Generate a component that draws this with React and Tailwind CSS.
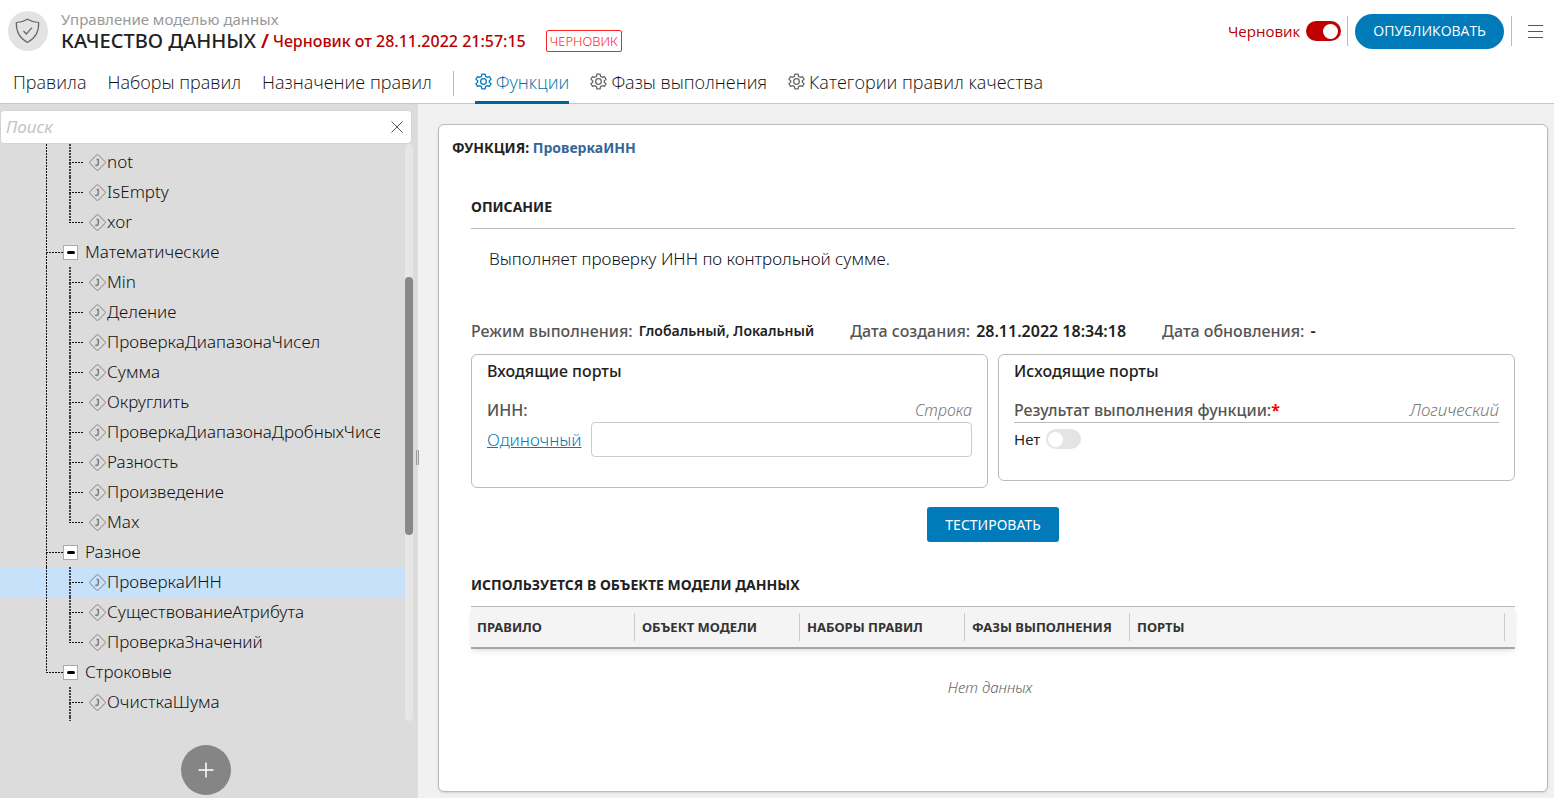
import React from "react";

const TREE = [
  { label: "not", leaf: true },
  { label: "IsEmpty", leaf: true },
  { label: "xor", leaf: true, last: true },
  { label: "Математические" },
  { label: "Min", leaf: true },
  { label: "Деление", leaf: true },
  { label: "ПроверкаДиапазонаЧисел", leaf: true },
  { label: "Сумма", leaf: true },
  { label: "Округлить", leaf: true },
  { label: "ПроверкаДиапазонаДробныхЧисел", leaf: true },
  { label: "Разность", leaf: true },
  { label: "Произведение", leaf: true },
  { label: "Max", leaf: true, last: true },
  { label: "Разное" },
  { label: "ПроверкаИНН", leaf: true, selected: true },
  { label: "СуществованиеАтрибута", leaf: true },
  { label: "ПроверкаЗначений", leaf: true, last: true },
  { label: "Строковые", last: true },
  { label: "ОчисткаШума", leaf: true, detached: true },
];

const DASH = "h-px shrink-0 bg-[repeating-linear-gradient(90deg,#111_0_2px,transparent_2px_3px)]";
const DOTS = "w-px bg-[repeating-linear-gradient(180deg,#111_0_2px,transparent_2px_3px)]";
const DOTS_WIDE = "w-[2px] bg-[repeating-linear-gradient(180deg,#444_0_2px,transparent_2px_3px)]";

function Branch({ dots, width, last }) {
  return (
    <span aria-hidden="true" className={"flex h-full shrink-0 flex-col " + width}>
      <span className={"h-[15px] " + dots} />
      <span className={DASH} />
      {!last && <span className={"grow " + dots} />}
    </span>
  );
}

function JavaIcon() {
  return (
    <svg aria-hidden="true" className="h-[17px] w-[17px] shrink-0" viewBox="0 0 17 17" fill="none" stroke="#808080">
      <path d="M7.5 1.1a1.4 1.4 0 0 1 2 0l6.4 6.4a1.4 1.4 0 0 1 0 2l-6.4 6.4a1.4 1.4 0 0 1-2 0L1.1 9.500a1.400 1.400 0 0 1 0-2z" />
      <path d="M7.500 5.500h2M9.300 5v4.800c0 1.100-.7 1.600-1.600 1.600-.6 0-1-.2-1.300-.5" strokeWidth="1.600" />
    </svg>
  );
}

function TreeRow({ item }) {
  if (!item.leaf) {
    return (
      <li className="flex h-[30px] items-center pl-[46px]">
        <Branch dots={DOTS} width="w-[17px]" last={item.last} />
        <button aria-label={"Свернуть " + item.label} className="flex h-[15px] w-[15px] shrink-0 items-center justify-center border border-[#aaa] bg-white">
          <span className="h-[3px] w-2 rounded-sm bg-black" />
        </button>
        <span className="ml-[7px]">{item.label}</span>
      </li>
    );
  }
  return (
    <li className={"flex h-[30px] items-center pl-[46px] pr-[25px] " + (item.selected ? "bg-[#c7e1fa]" : "")}>
      <span aria-hidden="true" className="h-full w-[23px] shrink-0">
        {!item.detached && <span className={"block h-full " + DOTS} />}
      </span>
      <Branch dots={DOTS_WIDE} width="w-[15px]" last={item.last} />
      <span className="ml-[5px] flex min-w-0 items-center gap-px">
        <JavaIcon />
        <span className="overflow-hidden whitespace-nowrap">{item.label}</span>
      </span>
    </li>
  );
}

function Gear() {
  return (
    <svg aria-hidden="true" className="h-[17px] w-[17px] shrink-0" viewBox="0 0 24 24" fill="none" stroke="currentColor" strokeWidth="1.800" strokeLinejoin="round">
      <path d="M9.700 1.500h4.600l.6 3.200 2.400 1.400 3.100-1.100 2.300 4-2.500 2.100v1.800l2.500 2.100-2.300 4-3.100-1.100-2.400 1.400-.6 3.200H9.700l-.6-3.200-2.400-1.400L3.600 19l-2.300-4 2.500-2.100v-1.800L1.300 9l2.300-4 3.100 1.100 2.400-1.400z" />
      <circle cx="12" cy="12" r="4" />
    </svg>
  );
}

function Tab({ children, gear, active }) {
  return (
    <a
      href="#"
      className={
        "flex h-[42px] items-center gap-1 border-b-[3px] text-lg font-light " +
        (active ? "border-[#006699] text-[#0070a8]" : "border-transparent text-[#111]")
      }
    >
      {gear && (
        <span className={active ? "text-[#007ab8]" : "text-[#666]"}>
          <Gear />
        </span>
      )}
      {children}
    </a>
  );
}

function Header() {
  return (
    <header className="flex shrink-0 flex-col border-b border-[#c8c8c8] bg-white">
      <div className="flex h-[62px] items-center pl-2 pr-[11px]">
        <span className="flex h-10 w-10 items-center justify-center rounded-full bg-[#e3e3e3]">
          <svg aria-hidden="true" className="h-[26px] w-[26px]" viewBox="0 0 26 26" fill="none" stroke="#666" strokeWidth="1.200" strokeLinejoin="round">
            <path d="M12.500 1.200c3 1.900 7 3 11.200 3.300.3 9-3 15.500-11.200 20C4.300 20 1 13.500 1.300 4.500c4.200-.3 8.200-1.400 11.200-3.300z" />
            <path d="M8.500 13l2.800 3 5.700-6.300" />
          </svg>
        </span>
        <div className="ml-[13px] flex flex-col">
          <span className="text-[15px] leading-5 text-[#999]">Управление моделью данных</span>
          <div className="flex items-center leading-6">
            <h1 className="text-xl font-medium leading-6 text-[#222]">КАЧЕСТВО ДАННЫХ</h1>
            <span className="ml-[5px] text-xl font-semibold leading-6 text-[#b80000]">/</span>
            <span className="ml-1 text-base font-medium text-[#b80000]">Черновик от 28.11.2022 21:57:15</span>
            <span className="ml-5 rounded-[2px] border border-[#ff2020] px-[3px] text-[13px] font-light leading-5 text-[#ff2020]">ЧЕРНОВИК</span>
          </div>
        </div>
        <div className="ml-auto flex items-center font-['Open_Sans','Noto_Sans',sans-serif]">
          <label htmlFor="draft" className="text-[15px] text-[#b80000]">Черновик</label>
          <input
            id="draft"
            type="checkbox"
            defaultChecked
            className="ml-[6px] flex h-5 w-[35px] appearance-none items-center justify-end rounded-full bg-[#c00000] px-[3px] before:h-[15px] before:w-[15px] before:rounded-full before:bg-white"
          />
          <span className="ml-[6px] h-[30px] w-px bg-[#bbb]" />
          <button className="ml-[7px] h-[35px] rounded-full bg-[#007ab8] px-[18px] text-sm text-white">ОПУБЛИКОВАТЬ</button>
          <span className="ml-[7px] h-[30px] w-px bg-[#bbb]" />
          <button aria-label="Меню" className="ml-4 flex w-[15px] flex-col gap-[5px]">
            <span className="h-px bg-[#555]" />
            <span className="h-px bg-[#555]" />
            <span className="h-px bg-[#555]" />
          </button>
        </div>
      </div>
      <nav className="-mb-px flex items-center gap-[21px] pl-[13px] font-['Open_Sans','Noto_Sans',sans-serif]">
        <Tab>Правила</Tab>
        <Tab>Наборы правил</Tab>
        <Tab>Назначение правил</Tab>
        <span className="h-[25px] w-px bg-[#bbb]" />
        <Tab gear active>Функции</Tab>
        <Tab gear>Фазы выполнения</Tab>
        <Tab gear>Категории правил качества</Tab>
      </nav>
    </header>
  );
}

function Sidebar() {
  return (
    <aside className="relative flex w-[418px] shrink-0 flex-col bg-[#dcdcdc] pt-[6px]">
      <div className="mr-[6px] flex h-[34px] shrink-0 items-center rounded border border-[#d4d4d4] bg-white pl-[5px] pr-2">
        <input aria-label="Поиск" placeholder="Поиск" className="grow bg-transparent text-[17px] italic outline-none placeholder:text-[#c4c4c4]" />
        <button aria-label="Очистить">
          <svg aria-hidden="true" className="h-3 w-3" viewBox="0 0 12 12" stroke="#555" fill="none">
            <path d="M.5.5l11 11M11.500.5l-11 11" />
          </svg>
        </button>
      </div>
      <div className="mr-[5px] flex min-h-0 grow">
        <div className="min-w-0 grow overflow-hidden text-[17px] font-light text-[#111]">
          <div aria-hidden="true" className="flex h-[3px] pl-[46px]">
            <span className="w-[23px]"><span className={"block h-full " + DOTS} /></span>
            <span className={DOTS_WIDE} />
          </div>
          <ul>
            {TREE.map((item) => (
              <TreeRow key={item.label} item={item} />
            ))}
          </ul>
          <div aria-hidden="true" className="flex h-1 pl-[69px]">
            <span className={DOTS_WIDE} />
          </div>
        </div>
        <div className="flex w-2 shrink-0 flex-col rounded-full bg-[#e6e6e6]">
          <span className="grow-[133]" />
          <span className="grow-[258] rounded-full bg-[#888]" />
          <span className="grow-[186]" />
        </div>
      </div>
      <div className="flex shrink-0 justify-center pb-[3px] pr-[6px] pt-6">
        <button aria-label="Добавить" className="flex h-[50px] w-[50px] items-center justify-center rounded-full bg-[#858585]">
          <svg aria-hidden="true" className="h-4 w-4" viewBox="0 0 16 16" stroke="#fff" strokeWidth="1.500">
            <path d="M8 .5v15M.5 8h15" />
          </svg>
        </button>
      </div>
      <span className="absolute -right-px top-[346px] h-[15px] w-[3px] border-x border-[#999]" />
    </aside>
  );
}

function Meta({ label, value, numeric }) {
  return (
    <div className="flex items-center gap-[6px]">
      <dt className="text-base font-medium text-[#555]">{label}</dt>
      <dd className={"font-semibold text-[#222] " + (numeric ? "text-base" : "text-sm")}>{value}</dd>
    </div>
  );
}

const COLUMNS = ["ОБЪЕКТ МОДЕЛИ", "НАБОРЫ ПРАВИЛ", "ФАЗЫ ВЫПОЛНЕНИЯ"];

function FunctionCard() {
  return (
    <section className="grow rounded-md border border-[#bbb] bg-white shadow-sm">
      <h2 className="px-[13px] pt-[13px] text-sm font-bold leading-5 text-[#222]">
        ФУНКЦИЯ: <span className="text-[#336699]">ПроверкаИНН</span>
      </h2>
      <div className="flex flex-col px-8">
        <h3 className="mt-[39px] border-b border-[#bbb] pb-[11px] text-sm font-bold leading-5 text-[#222]">ОПИСАНИЕ</h3>
        <p className="mt-[18px] px-[18px] text-[17px] font-light leading-6 text-[#111]">Выполняет проверку ИНН по контрольной сумме.</p>
        <dl className="mt-12 flex gap-9 leading-6">
          <Meta label="Режим выполнения:" value="Глобальный, Локальный" />
          <Meta label="Дата создания:" value="28.11.2022 18:34:18" numeric />
          <Meta label="Дата обновления:" value="-" numeric />
        </dl>
        <div className="mt-[11px] grid grid-cols-2 items-start gap-[10px]">
          <div className="rounded-md border border-[#bbb] px-[15px] pb-[30px] pt-1">
            <h4 className="text-base font-medium leading-6 text-[#222]">Входящие порты</h4>
            <div className="mt-[15px] flex justify-between text-base leading-6">
              <label htmlFor="inn" className="font-medium text-[#555]">ИНН:</label>
              <span className="font-light italic text-[#777]">Строка</span>
            </div>
            <div className="flex items-center gap-[10px]">
              <a href="#" className="text-[17px] font-light text-[#007ab8] underline">Одиночный</a>
              <input id="inn" className="h-[35px] min-w-0 grow rounded border border-[#ccc] bg-white px-2" />
            </div>
          </div>
          <div className="rounded-md border border-[#bbb] px-[15px] pb-[31px] pt-1">
            <h4 className="text-base font-medium leading-6 text-[#222]">Исходящие порты</h4>
            <div className="mt-[15px] flex justify-between border-b border-[#bbb] text-base leading-6">
              <label htmlFor="result" className="font-medium text-[#555]">
                Результат выполнения функции:<span className="font-bold text-[#ff0000]">*</span>
              </label>
              <span className="text-[17px] font-light italic text-[#777]">Логический</span>
            </div>
            <div className="mt-[6px] flex items-center gap-[6px]">
              <span className="text-[15px] leading-5 text-[#222]">Нет</span>
              <input
                id="result"
                type="checkbox"
                className="flex h-5 w-[35px] appearance-none items-center rounded-full bg-[#e4e4e4] px-[2px] before:h-[15px] before:w-[15px] before:rounded-full before:bg-white"
              />
            </div>
          </div>
        </div>
        <button className="mt-[19px] h-[35px] self-center rounded-[3px] bg-[#007ab8] px-[18px] text-sm text-white">ТЕСТИРОВАТЬ</button>
        <h3 className="mt-[33px] text-sm font-bold leading-5 text-[#222]">ИСПОЛЬЗУЕТСЯ В ОБЪЕКТЕ МОДЕЛИ ДАННЫХ</h3>
        <table className="mt-[11px] w-full table-fixed text-left">
          <thead className="border-b-2 border-t border-b-[#a6a6a6] border-t-[#bbb] bg-[#f4f4f4] shadow-md">
            <tr className="text-[13px] leading-7 text-[#333]">
              <th className="w-[164px] py-[6px] font-bold">
                <span className="block border-r border-[#ccc] pl-[6px]">ПРАВИЛО</span>
              </th>
              {COLUMNS.map((name) => (
                <th key={name} className="w-[165px] py-[6px] font-bold">
                  <span className="block whitespace-nowrap border-r border-[#ccc] pl-[7px]">{name}</span>
                </th>
              ))}
              <th className="py-[6px] pr-[10px] font-bold">
                <span className="block border-r border-[#ccc] pl-[7px]">ПОРТЫ</span>
              </th>
            </tr>
          </thead>
          <tbody>
            <tr>
              <td colSpan={5} className="pr-[6px] pt-[26px] text-center text-[15px] font-light italic leading-6 text-[#666]">Нет данных</td>
            </tr>
          </tbody>
        </table>
      </div>
    </section>
  );
}

export default function App() {
  return (
    <div className="flex h-screen flex-col overflow-hidden bg-[#f1f1f1] font-['Noto_Sans','Open_Sans',sans-serif]">
      <Header />
      <div className="flex min-h-0 grow">
        <Sidebar />
        <main className="flex min-w-0 grow flex-col pb-[6px] pl-5 pr-[6px] pt-5">
          <FunctionCard />
        </main>
      </div>
    </div>
  );
}
